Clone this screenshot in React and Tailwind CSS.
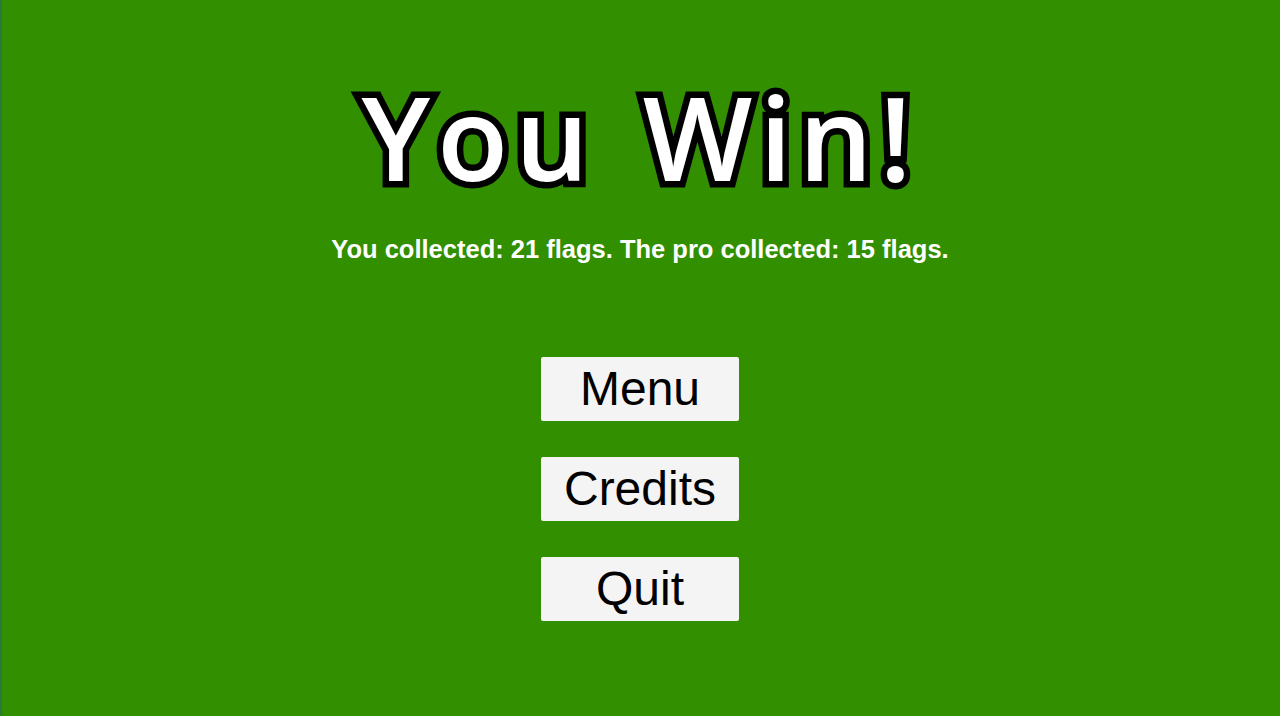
export default function App() {
  const buttons = ['Menu', 'Credits', 'Quit']
  return (
    <div className="w-[1280px] h-[716px] bg-[#318f00] shadow-[inset_2px_0_0_#2a7a3a] flex flex-col items-center overflow-hidden">
      <h1
        className="mt-[66px] h-[140px] leading-[140px] text-[116px] text-white font-['Open_Sans',sans-serif] font-semibold tracking-[7px] [word-spacing:10px] [paint-order:stroke_fill] [-webkit-text-stroke:13px_black]"
      >
        You Win!
      </h1>
      <p className="mt-[28px] text-[25.5px] leading-[30px] font-bold text-white font-['Liberation_Sans',Arial,sans-serif]">
        You collected: 21 flags. The pro collected: 15 flags.
      </p>
      <div className="mt-[93px] flex flex-col gap-[36px]">
        {buttons.map((b) => (
          <button
            key={b}
            className="w-[198px] h-[64px] bg-[#f4f4f4] rounded-[2px] text-black text-[48px] leading-[64px] font-['Liberation_Sans',Arial,sans-serif]"
          >
            {b}
          </button>
        ))}
      </div>
    </div>
  )
}
